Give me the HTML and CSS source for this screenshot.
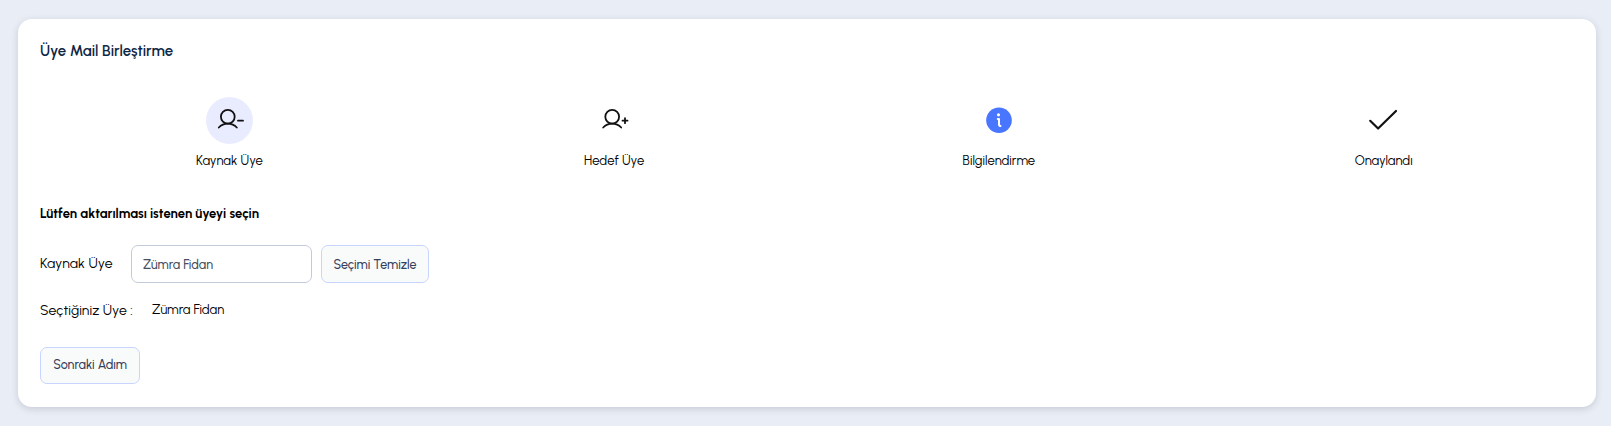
FILE: index.html
```
<!DOCTYPE html>
<html lang="tr">
<head>
    <meta charset="UTF-8">
    <meta name="viewport" content="width=device-width, initial-scale=1.0">
    <title>Üye Mail Birleştirme</title>
    <link rel="stylesheet" href="styles.css">
</head>
<body>
    <div class="card">
        <h1 class="card-title">Üye Mail Birleştirme</h1>

        <div class="steps">
            <div class="step active">
                <div class="step-icon">
                    <svg width="47" height="47" viewBox="0 0 47 47">
                        <circle cx="21.800" cy="19.800" r="6.900"/>
                        <path d="M12.800 30.500c2.500-2.600 5.500-3.800 9-3.800s6.500 1.200 9 3.800M32 23.700h5"/>
                    </svg>
                </div>
                <span class="step-label">Kaynak Üye</span>
            </div>
            <div class="step">
                <div class="step-icon">
                    <svg width="47" height="47" viewBox="0 0 47 47">
                        <circle cx="21.200" cy="19.800" r="6.900"/>
                        <path d="M12.200 30.500c2.500-2.600 5.500-3.800 9-3.800s6.500 1.200 9 3.800M31.500 23.700h5M34 21.200v5"/>
                    </svg>
                </div>
                <span class="step-label">Hedef Üye</span>
            </div>
            <div class="step">
                <div class="step-icon">
                    <svg class="info" width="47" height="47" viewBox="0 0 47 47">
                        <circle class="info-bg" cx="24" cy="23.300" r="12.800"/>
                        <circle class="info-dot" cx="23.500" cy="17.800" r="1.600"/>
                        <path d="M22.800 22h1.200v5.200q0 1.800 1.500 1.800"/>
                    </svg>
                </div>
                <span class="step-label">Bilgilendirme</span>
            </div>
            <div class="step">
                <div class="step-icon">
                    <svg class="check" width="47" height="47" viewBox="0 0 47 47">
                        <path d="M10.200 23.800l7.900 7.700L36 14"/>
                    </svg>
                </div>
                <span class="step-label">Onaylandı</span>
            </div>
        </div>

        <p class="hint">Lütfen aktarılması istenen üyeyi seçin</p>

        <div class="form-row">
            <label class="row-label" for="kaynak">Kaynak Üye</label>
            <input class="member-input" id="kaynak" type="text" value="Zümra Fidan">
            <button class="btn btn-clear" type="button">Seçimi Temizle</button>
        </div>

        <div class="selected-row">
            <span class="selected-label">Seçtiğiniz Üye :</span>
            <span class="selected-name">Zümra Fidan</span>
        </div>

        <button class="btn btn-next" type="button">Sonraki Adım</button>
    </div>
</body>
</html>
```

FILE: styles.css
```
* {
    box-sizing: border-box;
}
body {
    margin: 0;
    padding: 19px 15px 19px 18px;
    background-color: #e9edf5;
    color: #000;
    font-family: Urbanist, Lato, sans-serif;
    font-size: 14px;
}
.card {
    height: 388px;
    padding: 22px;
    background: #fff;
    border-radius: 14px;
    box-shadow: 0 2px 7px rgba(60, 70, 95, 0.2);
}
.card-title {
    margin: 0;
    color: #0f2744;
    font-size: 15px;
    font-weight: 600;
    line-height: 20px;
}
.steps {
    display: grid;
    grid-template-columns: repeat(4, 1fr);
    margin: 36px -2px 0 -3px;
}
.step {
    display: flex;
    flex-direction: column;
    align-items: center;
}
.step-icon {
    width: 47px;
    height: 47px;
    border-radius: 50%;
}
.active .step-icon {
    background-color: #e9ecff;
}
.step-icon svg {
    display: block;
    fill: none;
    stroke: #111;
    stroke-width: 1.8;
    stroke-linecap: round;
    stroke-linejoin: round;
}
.step-icon .check {
    stroke-width: 2.2;
}
.step-icon .info {
    stroke: #fff;
    stroke-width: 2;
}
.step-icon .info-bg {
    fill: #4876ff;
    stroke: none;
}
.step-icon .info-dot {
    fill: #fff;
    stroke: none;
}
.step-label {
    margin-top: 7px;
    font-size: 13px;
    letter-spacing: 0.02px;
    line-height: 20px;
}
.hint {
    margin: 33px 0 0;
    font-size: 13px;
    font-weight: 700;
    letter-spacing: 0.05px;
    line-height: 20px;
}
.form-row {
    display: flex;
    align-items: center;
    height: 38px;
    margin-top: 21px;
}
.row-label {
    width: 91px;
    letter-spacing: 0.08px;
    line-height: 20px;
}
.member-input {
    width: 181px;
    height: 38px;
    margin: 0 9px 0 0;
    padding: 0 11px;
    border: 1px solid #c3cad9;
    border-radius: 7px;
    color: #475060;
    font-family: inherit;
    font-size: 12.5px;
    font-weight: 500;
    outline: none;
}
.btn {
    display: block;
    padding: 0;
    border: 1px solid #c7d5ff;
    border-radius: 7px;
    background-color: #f9fbfb;
    color: #35405a;
    font-family: inherit;
    font-size: 12.5px;
    font-weight: 500;
    text-align: center;
}
.btn-clear {
    width: 108px;
    height: 38px;
}
.selected-row {
    display: flex;
    height: 20px;
    margin-top: 17px;
    line-height: 20px;
}
.selected-label {
    width: 112px;
    padding-top: 1px;
    letter-spacing: 0.06px;
}
.selected-name {
    font-size: 13px;
}
.btn-next {
    width: 100px;
    height: 37px;
    margin-top: 27px;
    padding-bottom: 2px;
}
```
